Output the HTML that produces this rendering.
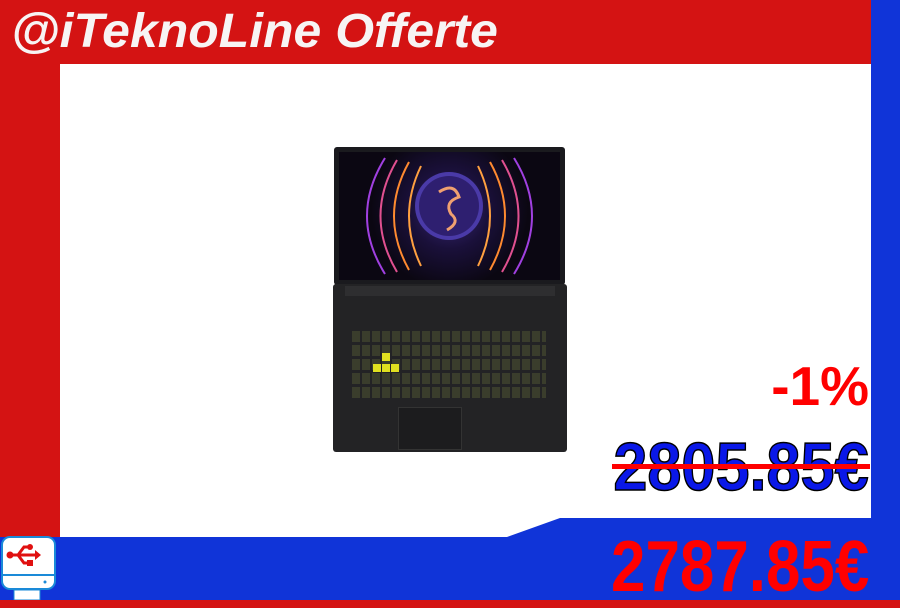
<!DOCTYPE html><html><head><style>
*{margin:0;padding:0}
body{width:900px;height:600px;position:relative;overflow:hidden;background:#d41313;font-family:"Liberation Sans",sans-serif}
.a{position:absolute;white-space:nowrap}
</style></head><body>
<div class="a" style="left:871px;top:0;width:29px;height:600px;background:#1034d8"></div>
<div class="a" style="left:60px;top:64px;width:811px;height:474px;background:#fff"></div>
<svg class="a" style="left:0;top:0" width="900" height="600"><polygon points="0,537 507,537 560,518 871,518 871,600 0,600" fill="#1034d8"/></svg>
<div class="a" style="left:11px;top:4px;color:#f7f4f4;font-size:48px;font-weight:bold;font-style:italic;transform:scaleX(1.04);transform-origin:left top">@iTeknoLine Offerte</div>
<!-- laptop -->
<div class="a" style="left:334px;top:147px;width:231px;height:138px;background:#1a1a1e;border-radius:3px"></div>
<div class="a" style="left:339px;top:152px;width:221px;height:128px;background:radial-gradient(circle at 50% 45%,#3a2a7a 0,#1a103a 30%,#0b0712 60%)"></div>
<svg class="a" style="left:339px;top:152px" width="221" height="128">
<g fill="none" stroke-width="2">
<path d="M70 10 Q40 64 70 118" stroke="#ff8a30"/><path d="M58 8 Q25 64 58 120" stroke="#e05090"/><path d="M46 6 Q10 64 46 122" stroke="#a040e0"/><path d="M82 14 Q58 64 82 114" stroke="#ffa040"/>
<path d="M151 10 Q181 64 151 118" stroke="#ff8a30"/><path d="M163 8 Q196 64 163 120" stroke="#e05090"/><path d="M175 6 Q211 64 175 122" stroke="#a040e0"/><path d="M139 14 Q163 64 139 114" stroke="#ffa040"/>
</g>
<circle cx="110" cy="54" r="34" fill="#4a3aa8"/><circle cx="110" cy="54" r="30" fill="#2e1f70"/>
<path d="M100 40 Q115 30 120 45 Q105 50 112 62 Q122 70 108 78" stroke="#f0a070" stroke-width="3" fill="none"/>
</svg>
<div class="a" style="left:333px;top:284px;width:234px;height:168px;background:#232325;border-radius:3px"></div>
<div class="a" style="left:345px;top:286px;width:210px;height:10px;background:#2e2e30"></div>
<div class="a" style="left:352px;top:330px;width:194px;height:68px;background:repeating-linear-gradient(90deg,#3a3d2c 0 8px,#232325 8px 10px)"></div>
<div class="a" style="left:352px;top:330px;width:194px;height:68px;background:repeating-linear-gradient(0deg,transparent 0 11px,#232325 11px 14px)"></div>
<div class="a" style="left:382px;top:353px;width:8px;height:8px;background:#e0e020"></div>
<div class="a" style="left:373px;top:364px;width:26px;height:8px;background:repeating-linear-gradient(90deg,#e0e020 0 8px,transparent 8px 9px)"></div>
<div class="a" style="left:398px;top:407px;width:62px;height:41px;background:#1c1c1e;border:1px solid #333"></div>
<!-- prices -->
<div class="a" style="right:31px;top:354px;color:#f00;font-size:55px;font-weight:bold">-1%</div>
<div class="a" style="right:31px;top:428px;color:#0a18e8;font-size:68px;font-weight:bold;-webkit-text-stroke:1.5px #000;transform:scaleX(0.9);transform-origin:right top">2805.85€</div>
<div class="a" style="left:612px;top:464px;width:258px;height:5px;background:#f00"></div>
<div class="a" style="right:31px;top:526px;color:#f00;font-size:72px;font-weight:bold;transform:scaleX(0.86);transform-origin:right top">2787.85€</div>
<!-- icon -->
<svg class="a" style="left:0;top:535px" width="60" height="65">
<rect x="2" y="2" width="53" height="52" rx="8" fill="#fff" stroke="#1a8ad8" stroke-width="2"/>
<line x1="2" y1="40" x2="55" y2="40" stroke="#1a8ad8" stroke-width="2"/>
<circle cx="45" cy="47" r="1.5" fill="#1a8ad8"/>
<rect x="14" y="55" width="26" height="10" fill="#fff" stroke="#1a8ad8"/>
<path d="M10 20 H36 M18 20 L24 12 H30 M18 20 L24 28 H30" stroke="#e01010" stroke-width="3" fill="none"/>
<circle cx="10" cy="20" r="3.5" fill="#e01010"/><path d="M35 15 L41 20 L35 25Z" fill="#e01010"/>
<circle cx="30" cy="12" r="3" fill="#e01010"/><rect x="27" y="25" width="6" height="6" fill="#e01010"/>
</svg>
</body></html>
